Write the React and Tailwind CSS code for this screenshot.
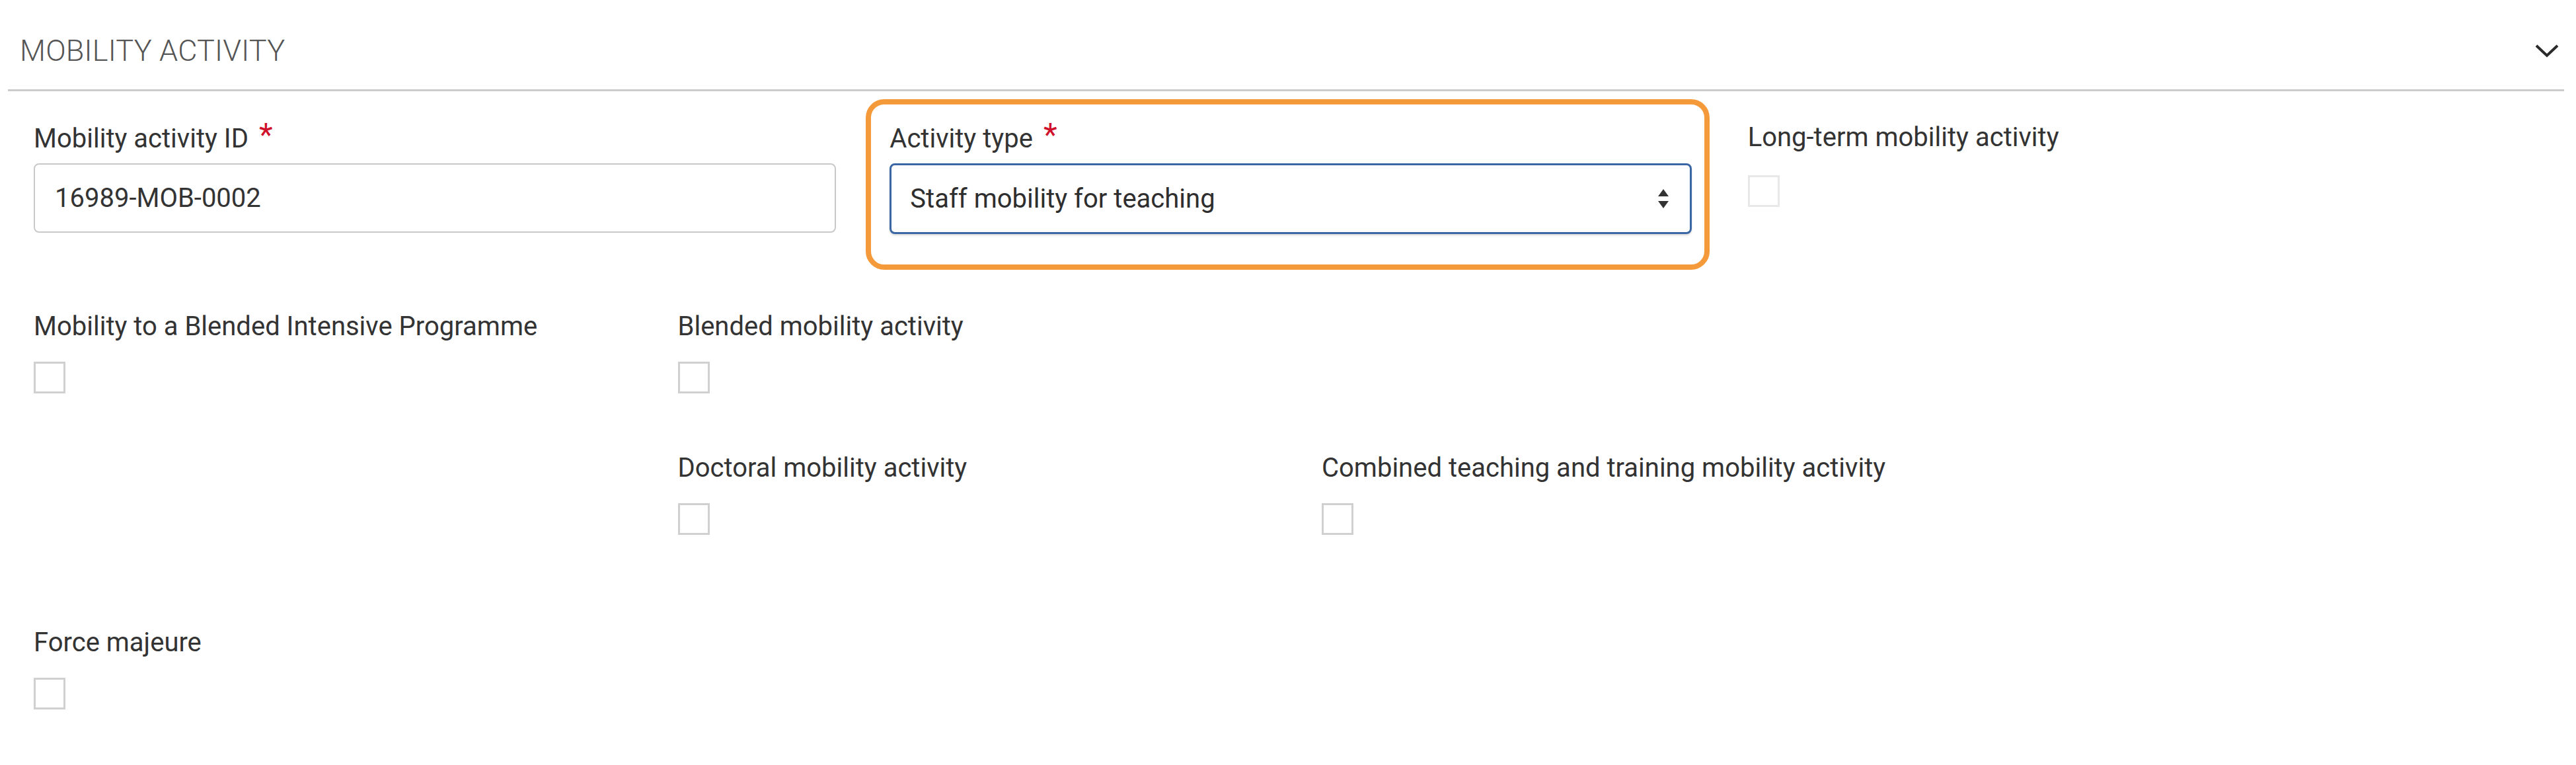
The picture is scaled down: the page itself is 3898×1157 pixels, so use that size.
import React from 'react';

const Required = () => (
  <span className="relative -top-[10px] ml-[16px] text-[48px] leading-none text-[#d0112b]">*</span>
);

const Label = ({ children, required }) => (
  <div className="flex items-start h-[40px] text-[40px] leading-[40px] text-[#333333] whitespace-nowrap">
    <span>{children}</span>
    {required && <Required />}
  </div>
);

const Checkbox = ({ disabled }) => (
  <div
    className={`w-[48px] h-[48px] bg-white border-[3px] ${
      disabled ? 'border-[#e8e8e8]' : 'border-[#d0d0d0]'
    }`}
  ></div>
);

const CheckField = ({ label, disabled, gap = 'mt-[33px]' }) => (
  <div className="pl-[51px]">
    <Label>{label}</Label>
    <div className={gap}>
      <Checkbox disabled={disabled} />
    </div>
  </div>
);

export default function App() {
  return (
    <div className="min-h-screen w-full bg-white font-['Roboto','Liberation_Sans',sans-serif] text-[#333333]">
      {/* Section header */}
      <div className="ml-[12px] w-[3868px] flex items-center justify-between pt-[54px] pb-[36px] border-b-[3px] border-[#cbcbcb]">
        <span className="pl-[18px] text-[45px] leading-[45px] font-light text-[#555555] tracking-[0.2px]">
          MOBILITY ACTIVITY
        </span>
        <svg width="40" height="26" viewBox="0 0 40 26" className="mr-[6px]">
          <polyline points="4,5 20,20 36,5" fill="none" stroke="#2b2b2b" strokeWidth="4" />
        </svg>
      </div>

      {/* Row 1 */}
      <div className="grid grid-cols-3 mt-[52px]">
        <div className="pl-[51px]">
          <Label required>Mobility activity ID</Label>
          <div className="mt-[17px] w-[1214px] h-[105px] flex items-center pl-[30px] border-2 border-[#c9c9c9] rounded-[8px] text-[40px] text-[#333333]">
            16989-MOB-0002
          </div>
        </div>

        <div className="relative pl-[47px]">
          <Label required>Activity type</Label>
          <div className="mt-[17px] w-[1214px] h-[107px] flex items-center justify-between pl-[28px] pr-[30px] border-[3px] border-[#3a66a3] rounded-[8px] shadow-[0_2px_3px_rgba(0,0,0,0.15)] text-[40px] text-[#2e2e2e]">
            <span>Staff mobility for teaching</span>
            <svg width="20" height="32" viewBox="0 0 20 32">
              <polygon points="10,1 18,12 2,12" fill="#333333" />
              <polygon points="2,19 18,19 10,30" fill="#333333" />
            </svg>
          </div>
          <div className="absolute left-[11px] -top-[40px] w-[1277px] h-[258px] border-[8px] border-[#f59a3a] rounded-[28px] pointer-events-none"></div>
        </div>

        <div className="pl-[46px] -mt-[2px]">
          <Label>Long-term mobility activity</Label>
          <div className="mt-[37px]">
            <Checkbox disabled />
          </div>
        </div>
      </div>

      {/* Row 2 */}
      <div className="grid grid-cols-4 mt-[120px]">
        <CheckField label="Mobility to a Blended Intensive Programme" />
        <CheckField label="Blended mobility activity" />
        <div></div>
        <div></div>
      </div>

      {/* Row 3 */}
      <div className="grid grid-cols-4 mt-[93px]">
        <div></div>
        <CheckField label="Doctoral mobility activity" />
        <CheckField label="Combined teaching and training mobility activity" />
        <div></div>
      </div>

      {/* Row 4 */}
      <div className="grid grid-cols-4 mt-[143px]">
        <CheckField label="Force majeure" />
        <div></div>
        <div></div>
        <div></div>
      </div>
    </div>
  );
}
